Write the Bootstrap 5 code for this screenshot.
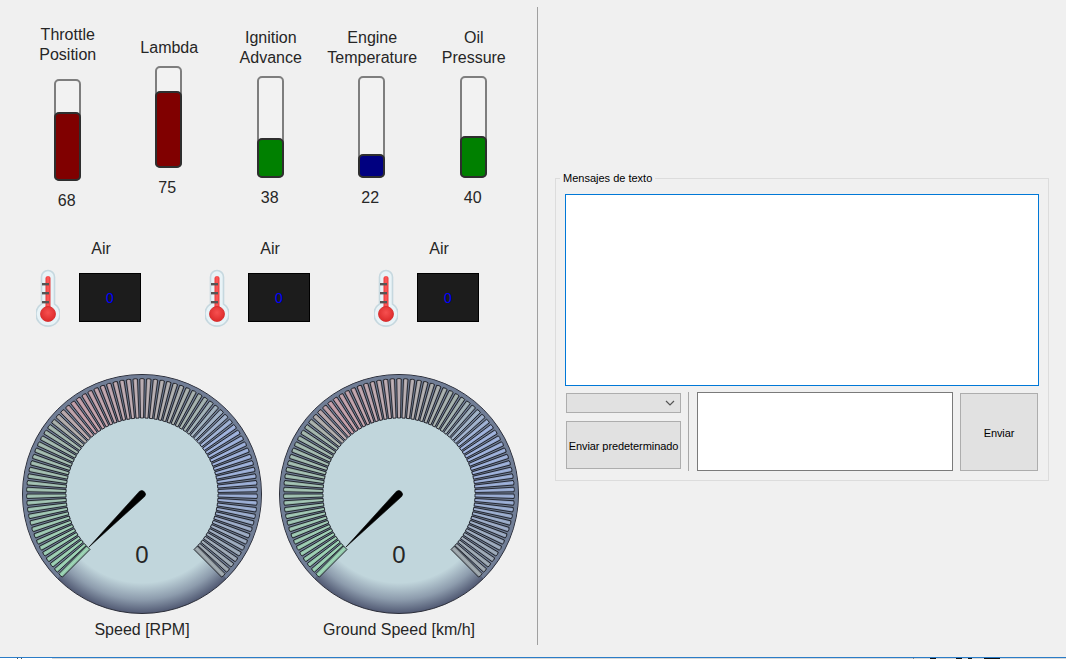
<!DOCTYPE html>
<html lang="es">
<head>
<meta charset="utf-8">
<title>Panel</title>
<link href="https://cdn.jsdelivr.net/npm/bootstrap@5.3.0/dist/css/bootstrap.min.css" rel="stylesheet">
<style>
html,body{height:659px;overflow:hidden}
body{background:#f0f0f0;color:#262626;font-family:"Liberation Sans",Arial,sans-serif;font-size:16px;line-height:20px}
.shell{height:657px}
.left-pane{width:537px;flex:none;padding:0 0 0 17px}
.vsep{width:1px;flex:none;background:#a0a0a0;margin-top:7px;height:638px}
.right-pane{flex:1;padding:178px 17px 0 17px}
.bars-row{height:226px}
.meter-col{width:101.5px;flex:none}
.pt-a{padding-top:25px}.pt-b{padding-top:38px}.pt-c{padding-top:28px}
.meter-label{margin-bottom:8px;white-space:nowrap}
.meter-label.tall{margin-bottom:14px}
.tube{width:27px;height:102px;border:2px solid #7e7e7e;border-radius:5px;background:#f2f2f2;margin-bottom:10px}
.tube.nudge{margin-left:-1px}
.tube-fill{border:2px solid #2e2e2e;border-radius:5px;margin:-2px;width:27px;flex:none}
.fill-red{background:#800000}.fill-green{background:#008000}.fill-navy{background:#000080}
.val{margin-left:-2px}
.val.nudge{margin-left:-4px}
.air-row{height:148px;padding-left:19px;padding-top:13px}
.air-unit{width:169px;flex:none}
.air-title{width:130px;height:20px;margin-bottom:10px}
.air-body{gap:19px;height:60px}
.thermo{width:24px;height:60px;flex:none}
.lcd{width:62px;height:49px;background:#1c1c1c;border:1px solid #000;color:#00f;font-size:14px;margin-top:4px}
.gauges{gap:17px;margin-left:5px}
.gauge-unit{width:240px;flex:none}
.gauge-wrap{width:240px;height:240px;position:relative}
.gauge-wrap svg{display:block}
.gauge-num{position:absolute;left:0;right:0;top:167px;text-align:center;font-size:24px;line-height:28px}
.gauge-cap{margin-top:6px;white-space:nowrap}
.msg-box{height:303px;border:1px solid #dcdcdc;position:relative;padding:15px 9px 0 9px;color:#000;font-size:11px;line-height:12px}
.msg-legend{position:absolute;left:4px;top:-7px;background:#f0f0f0;padding:0 3px;white-space:nowrap}
.msg-view{height:192px;background:#fff;border:1px solid #0078d7}
.controls{margin-top:6px;height:80px}
.stack{width:115px;margin-left:1px;flex:none}
.combo{height:20px;background:#e1e1e1;border:1px solid #adadad;margin-top:1px;padding-right:5px}
.press{background:#e1e1e1;border:1px solid #adadad;color:#000;font-size:11px;line-height:12px;padding:2px 0 0;border-radius:0;white-space:nowrap;letter-spacing:-.08px}
.press:hover{background:#e1e1e1;border-color:#adadad;color:#000}
.press-a{height:48px;width:115px;margin-top:8px}
.press-b{height:78px;width:78px;margin-top:1px;margin-left:7px;flex:none}
.inner-sep{width:1px;height:79px;background:#a8a8a8;margin:0 8px 0 7px;flex:none}
.entry{width:256px;height:79px;background:#fff;border:1px solid #7a7a7a;flex:none}
.foot{height:2px;border-top:1px solid #2a7cc7}
.foot-base{height:1px;background:linear-gradient(90deg,#fff 0 17px,#555 17px 18px,#fff 18px 21px,#555 21px 22px,#fff 22px 52px,#d8d8d8 52px 913px,#888 913px 914px,#d8d8d8 914px 930px,#111 930px 936px,#d8d8d8 936px 956px,#111 956px 962px,#d8d8d8 962px 968px,#111 968px 972px,#d8d8d8 972px 984px,#111 984px 1000px,#d8d8d8 1000px)}
</style>
</head>
<body>
<div class="shell d-flex">
  <section class="left-pane">
    <div class="bars-row d-flex align-items-start">
      <div class="meter-col pt-a d-flex flex-column align-items-center">
        <div class="meter-label tall text-center">Throttle<br>Position</div>
        <div class="tube d-flex align-items-end"><div class="tube-fill fill-red" style="height:69px"></div></div>
        <div class="val">68</div>
      </div>
      <div class="meter-col pt-b d-flex flex-column align-items-center">
        <div class="meter-label text-center">Lambda</div>
        <div class="tube nudge d-flex align-items-end"><div class="tube-fill fill-red" style="height:77px"></div></div>
        <div class="val nudge">75</div>
      </div>
      <div class="meter-col pt-c d-flex flex-column align-items-center">
        <div class="meter-label text-center">Ignition<br>Advance</div>
        <div class="tube d-flex align-items-end"><div class="tube-fill fill-green" style="height:40px"></div></div>
        <div class="val">38</div>
      </div>
      <div class="meter-col pt-c d-flex flex-column align-items-center">
        <div class="meter-label text-center">Engine<br>Temperature</div>
        <div class="tube nudge d-flex align-items-end"><div class="tube-fill fill-navy" style="height:24px"></div></div>
        <div class="val nudge">22</div>
      </div>
      <div class="meter-col pt-c d-flex flex-column align-items-center">
        <div class="meter-label text-center">Oil<br>Pressure</div>
        <div class="tube d-flex align-items-end"><div class="tube-fill fill-green" style="height:42px"></div></div>
        <div class="val">40</div>
      </div>
    </div>
    <div class="air-row d-flex align-items-start">
      <div class="air-unit">
        <div class="air-title text-center">Air</div>
        <div class="air-body d-flex align-items-start">
          <svg class="thermo" viewBox="0 0 24 60"><use href="#thermo-shape"/></svg>
          <div class="lcd d-flex align-items-center justify-content-center">0</div>
        </div>
      </div>
      <div class="air-unit">
        <div class="air-title text-center">Air</div>
        <div class="air-body d-flex align-items-start">
          <svg class="thermo" viewBox="0 0 24 60"><use href="#thermo-shape"/></svg>
          <div class="lcd d-flex align-items-center justify-content-center">0</div>
        </div>
      </div>
      <div class="air-unit">
        <div class="air-title text-center">Air</div>
        <div class="air-body d-flex align-items-start">
          <svg class="thermo" viewBox="0 0 24 60"><use href="#thermo-shape"/></svg>
          <div class="lcd d-flex align-items-center justify-content-center">0</div>
        </div>
      </div>
    </div>
    <div class="gauges d-flex">
      <div class="gauge-unit text-center">
        <div class="gauge-wrap"><svg class="dial" width="240" height="240" viewBox="-120 -120 240 240"></svg><div class="gauge-num">0</div></div>
        <div class="gauge-cap">Speed [RPM]</div>
      </div>
      <div class="gauge-unit text-center">
        <div class="gauge-wrap"><svg class="dial" width="240" height="240" viewBox="-120 -120 240 240"></svg><div class="gauge-num">0</div></div>
        <div class="gauge-cap">Ground Speed [km/h]</div>
      </div>
    </div>
  </section>
  <div class="vsep"></div>
  <section class="right-pane">
    <div class="msg-box">
      <div class="msg-legend">Mensajes de texto</div>
      <div class="msg-view"></div>
      <div class="controls d-flex align-items-start">
        <div class="stack d-flex flex-column">
          <div class="combo d-flex align-items-center justify-content-end">
            <svg width="10" height="6" viewBox="0 0 10 6"><path d="M1 1l4 4 4-4" fill="none" stroke="#555" stroke-width="1.2"/></svg>
          </div>
          <button type="button" class="btn press press-a">Enviar predeterminado</button>
        </div>
        <div class="inner-sep"></div>
        <div class="entry"></div>
        <button type="button" class="btn press press-b">Enviar</button>
      </div>
    </div>
  </section>
</div>
<div class="foot"><div class="foot-base"></div></div>

<svg width="0" height="0" class="position-absolute">
  <defs>
    <linearGradient id="th-red" x1="0" x2="1" y1="0" y2="0"><stop offset="0" stop-color="#e83a3a"/><stop offset=".5" stop-color="#ff5a5a"/><stop offset="1" stop-color="#e83a3a"/></linearGradient>
    <radialGradient id="th-bulb" cx=".5" cy=".4" r=".6"><stop offset="0" stop-color="#f65050"/><stop offset="1" stop-color="#dc2a2a"/></radialGradient>
    <g id="thermo-shape">
      <path d="M5.500 8a6.500 6.500 0 0 1 13 0V35A12 12 0 1 1 5.500 35Z" fill="#e8f3f7" stroke="#c6d8df" stroke-width="1.600"/>
      <rect x="9.500" y="7" width="5" height="36" rx="2.500" fill="url(#th-red)"/>
      <circle cx="12" cy="45" r="7.500" fill="url(#th-bulb)" stroke="#d42a2a" stroke-width=".8"/>
      <rect x="6" y="14" width="7" height="2.400" fill="#555"/>
      <rect x="6" y="23" width="7" height="2.400" fill="#555"/>
      <rect x="6" y="32" width="7" height="2.400" fill="#555"/>
    </g>
    <radialGradient id="face" gradientUnits="userSpaceOnUse" cx="0" cy="0" r="120">
      <stop offset="0" stop-color="#c1d6dc"/><stop offset=".74" stop-color="#c1d6dc"/><stop offset=".88" stop-color="#8d9cad"/><stop offset="1" stop-color="#4e5670"/>
    </radialGradient>
  </defs>
</svg>

<script>
document.querySelectorAll('.dial').forEach(function(svg){
  var NS='http://www.w3.org/2000/svg';
  function el(n,a){var e=document.createElementNS(NS,n);for(var k in a)e.setAttribute(k,a[k]);svg.appendChild(e);return e;}
  function mix(a,b,t){return a.map(function(v,i){return Math.round(v+(b[i]-v)*t);});}
  function css(c){return 'rgb('+c.join(',')+')';}
  el('circle',{r:119.5,fill:'url(#face)',stroke:'#2c2f3a','stroke-width':1});
  var ro=119,ri=76,a0=Math.PI*0.75,a1=Math.PI*2.25;
  function pt(r,a){return (r*Math.cos(a)).toFixed(2)+' '+(r*Math.sin(a)).toFixed(2);}
  el('path',{d:'M'+pt(ri,a0)+'L'+pt(ro,a0)+'A'+ro+' '+ro+' 0 1 1 '+pt(ro,a1)+'L'+pt(ri,a1)+'A'+ri+' '+ri+' 0 1 0 '+pt(ri,a0)+'Z',fill:'#717e96'});
  var stops=[[0,[160,220,185]],[.12,[165,205,185]],[.3,[170,190,180]],[.36,[205,165,175]],[.5,[195,180,185]],[.62,[170,185,180]],[.7,[165,185,230]],[.85,[160,180,220]],[1,[165,175,180]]];
  var n=81;
  for(var i=0;i<n;i++){
    var t=i/(n-1),c=stops[0][1];
    for(var s=0;s<stops.length-1;s++){if(t>=stops[s][0]&&t<=stops[s+1][0]){c=mix(stops[s][1],stops[s+1][1],(t-stops[s][0])/(stops[s+1][0]-stops[s][0]));break;}}
    var deg=-135+270*t;
    var g=document.createElementNS(NS,'linearGradient');
    var id='tk'+Math.random().toString(36).slice(2);
    g.setAttribute('id',id);g.setAttribute('x1','0');g.setAttribute('x2','1');g.setAttribute('y1','0');g.setAttribute('y2','0');
    var lo=mix(c,[70,75,85],.35);
    [[0,lo],[.5,c],[1,lo]].forEach(function(p){var st=document.createElementNS(NS,'stop');st.setAttribute('offset',p[0]);st.setAttribute('stop-color',css(p[1]));g.appendChild(st);});
    svg.appendChild(g);
    var wi=(i===0||i===n-1)?2.5:1.5, wo=(i===0||i===n-1)?2.5:2.3;
    el('path',{d:'M'+(-wi)+' -76 L'+(-wo)+' -115 Q0 -116 '+wo+' -115 L'+wi+' -76 Z',fill:'url(#'+id+')',stroke:'#14161c','stroke-width':.8,'stroke-linejoin':'round',transform:'rotate('+deg+')'});
  }
  el('path',{d:'M-53 53 L-2.600 -2.600 A3.700 3.700 0 0 1 2.600 2.600 Z',fill:'#000',stroke:'#000','stroke-width':.6,'stroke-linejoin':'round'});
});
</script>
<script src="https://cdn.jsdelivr.net/npm/bootstrap@5.3.0/dist/js/bootstrap.bundle.min.js"></script>
</body>
</html>
